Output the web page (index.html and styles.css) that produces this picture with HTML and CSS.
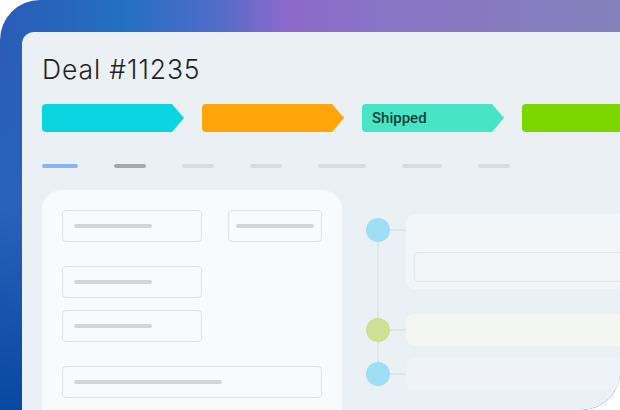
FILE: index.html
```html
<!DOCTYPE html>
<html lang="en">
<head>
    <meta charset="UTF-8">
    <meta name="viewport" content="width=device-width, initial-scale=1.0">
    <title>Deal #11235</title>
    <link rel="stylesheet" href="styles.css">
</head>
<body>
    <div class="frame">
        <div class="panel">
            <h1 class="title">Deal #11235</h1>
            <ul class="stages">
                <li class="stage stage-cyan"></li>
                <li class="stage stage-orange"></li>
                <li class="stage stage-teal">Shipped</li>
                <li class="stage stage-green"></li>
            </ul>
            <ul class="tabs">
                <li class="tab active" style="width:36px"></li>
                <li class="tab current" style="width:32px"></li>
                <li class="tab" style="width:32px"></li>
                <li class="tab" style="width:32px"></li>
                <li class="tab" style="width:48px"></li>
                <li class="tab" style="width:40px"></li>
                <li class="tab" style="width:32px"></li>
            </ul>
            <div class="content">
                <div class="form-card">
                    <div class="row">
                        <div class="field field-md"><span class="line"></span></div>
                        <div class="field field-sm"><span class="line"></span></div>
                    </div>
                    <div class="row row-gap">
                        <div class="field field-md"><span class="line"></span></div>
                    </div>
                    <div class="row row-tight">
                        <div class="field field-md"><span class="line"></span></div>
                    </div>
                    <div class="row row-gap">
                        <div class="field field-lg"><span class="line line-long"></span></div>
                    </div>
                </div>
                <ul class="timeline">
                    <li class="event">
                        <span class="dot dot-blue"></span>
                        <span class="link"></span>
                        <div class="event-card event-card-big">
                            <div class="event-input"></div>
                        </div>
                    </li>
                    <li class="event event-far">
                        <span class="dot dot-green"></span>
                        <span class="link"></span>
                        <div class="event-card event-card-green"></div>
                    </li>
                    <li class="event event-near">
                        <span class="dot dot-blue"></span>
                        <span class="link"></span>
                        <div class="event-card"></div>
                    </li>
                </ul>
            </div>
        </div>
    </div>
</body>
</html>
```

FILE: styles.css
```css
*{
    padding: 0;
    margin: 0;
    box-sizing: border-box;
}
li{
    list-style: none;
}
body{
    background-color: #fff;
    width: 620px;
    height: 410px;
    overflow: hidden;
}
.frame{
    width: 620px;
    height: 410px;
    padding: 32px 0 0 22px;
    border-radius: 40px 0 38px 0;
    overflow: hidden;
    display: flex;
    background:
        linear-gradient(180deg, rgba(10,72,163,0) 0%, rgba(10,72,163,0) 12%, rgba(40,100,185,0.6) 50%, #0748a3 100%),
        linear-gradient(90deg, #2a5cb8 0%, #2470c0 20%, #4d6cc8 34%, #8c69cb 46%, #8974c4 62%, #8481bc 100%);
}
.panel{
    flex: 1;
    background-color: #ebf0f5;
    border-radius: 12px 0 0 0;
    padding: 21px 0 0 20px;
    overflow: hidden;
}
.title{
    font-family: "Inter", "Noto Sans", sans-serif;
    font-weight: 300;
    font-size: 26.5px;
    line-height: 32px;
    color: #1f2326;
    letter-spacing: 0.9px;
}
.stages{
    display: flex;
    gap: 18px;
    margin-top: 19px;
    width: 640px;
}
.stage{
    flex: none;
    width: 142px;
    height: 28px;
    border-radius: 4px;
    clip-path: polygon(0 0, calc(100% - 12px) 0, 100% 50%, calc(100% - 12px) 100%, 0 100%);
    font-family: "Roboto", "Liberation Sans", sans-serif;
    font-size: 15px;
    font-weight: 500;
    line-height: 29px;
    padding-left: 10px;
    color: #103f36;
}
.stage-cyan{
    background-color: #0bd5e0;
}
.stage-orange{
    background-color: #ffa409;
}
.stage-teal{
    background-color: #48e4c6;
}
.stage-green{
    background-color: #7dd600;
}
.tabs{
    display: flex;
    gap: 36px;
    margin-top: 32px;
}
.tab{
    height: 4px;
    border-radius: 2px;
    background-color: #d9dde1;
}
.tab.active{
    background-color: #8bb4f7;
}
.tab.current{
    background-color: #a5a7aa;
}
.content{
    display: flex;
    align-items: flex-start;
    gap: 24px;
    margin-top: 22px;
    width: 640px;
}
.form-card{
    flex: none;
    width: 300px;
    height: 260px;
    background-color: #f8fafc;
    border-radius: 20px;
    padding: 20px;
}
.row{
    display: flex;
    gap: 26px;
}
.row-gap{
    margin-top: 24px;
}
.row-tight{
    margin-top: 12px;
}
.field{
    height: 32px;
    border: 1px solid #dde0e4;
    border-radius: 4px;
    padding-left: 11px;
    display: flex;
    align-items: center;
}
.field-md{
    width: 140px;
}
.field-sm{
    width: 94px;
    padding-left: 7px;
}
.field-lg{
    width: 260px;
}
.line{
    width: 78px;
    height: 4px;
    border-radius: 2px;
    background-color: #d3d5d8;
}
.line-long{
    width: 148px;
}
.timeline{
    position: relative;
    flex: 1;
    margin-top: 24px;
}
.timeline::before{
    content: "";
    position: absolute;
    left: 11px;
    top: 16px;
    bottom: 16px;
    width: 2px;
    background-color: #e1e5e8;
}
.event{
    display: flex;
    align-items: flex-start;
    position: relative;
}
.event-far{
    margin-top: 25px;
}
.event-near{
    margin-top: 12px;
}
.dot{
    flex: none;
    width: 24px;
    height: 24px;
    margin-top: 4px;
    border-radius: 50%;
}
.dot-blue{
    background-color: #9ddff5;
}
.dot-green{
    background-color: #cde093;
}
.link{
    flex: none;
    width: 16px;
    height: 2px;
    margin-top: 15px;
    background-color: #e1e5e8;
}
.event-card{
    flex: 1;
    height: 32px;
    border-radius: 8px;
    background-color: #eff3f7;
}
.event-card-big{
    height: 75px;
    padding: 38px 0 0 8px;
    background-color: #f2f6f9;
}
.event-card-green{
    background-color: #f4f7f1;
}
.event-input{
    height: 30px;
    border: 1px solid #e0e4e8;
    border-radius: 4px;
    background-color: #f3f6f9;
}
```
